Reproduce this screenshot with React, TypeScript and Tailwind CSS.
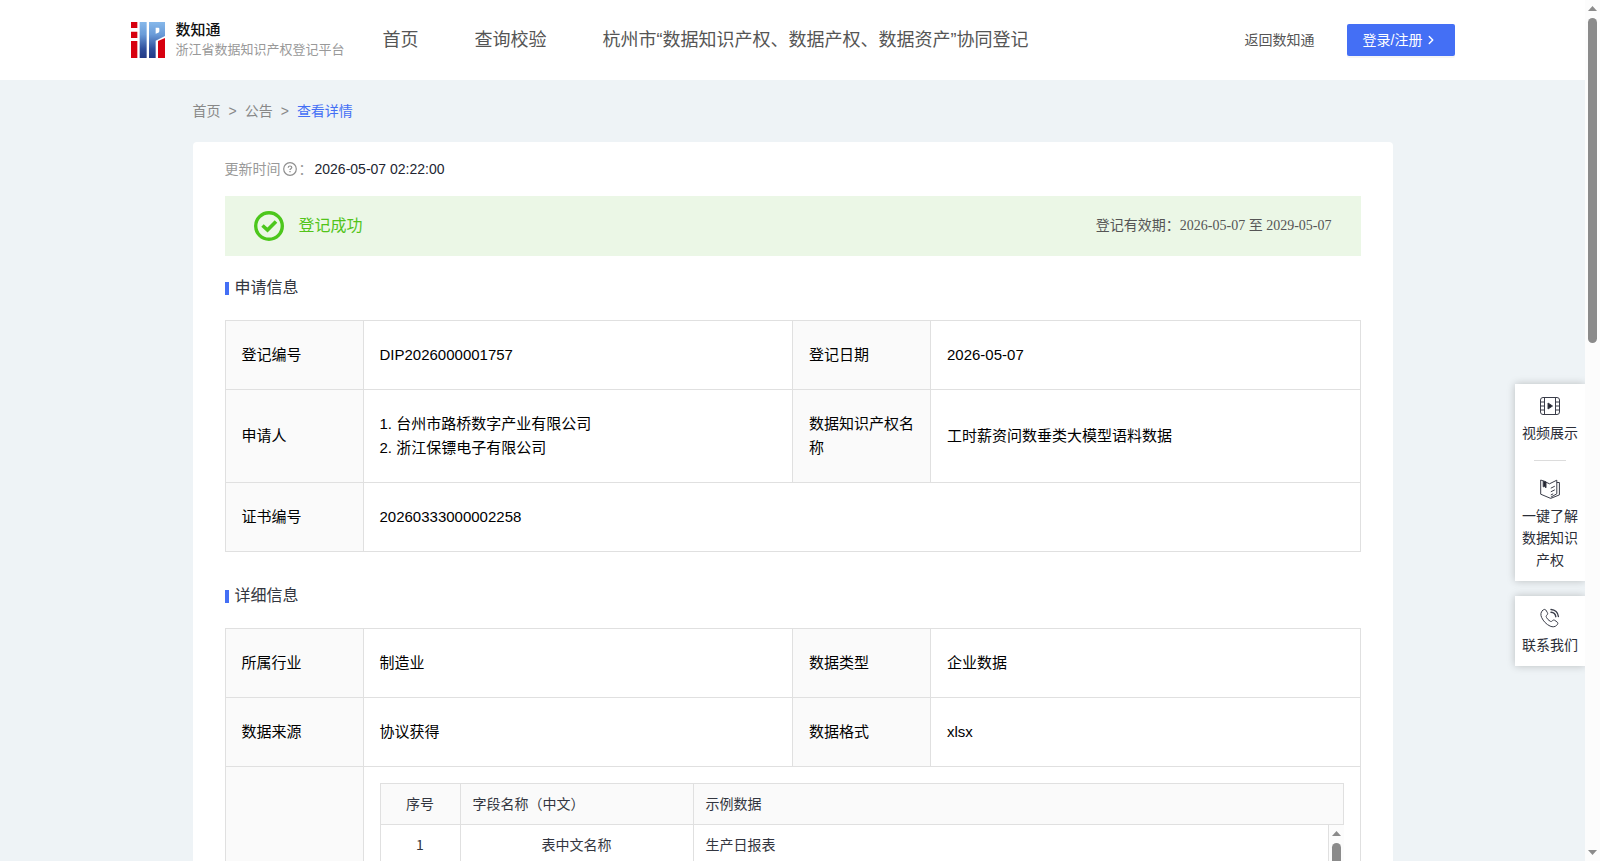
import { ReactNode } from 'react'
import { ChevronRight } from 'lucide-react'

const navLinks = ['首页', '查询校验', '杭州市“数据知识产权、数据产权、数据资产”协同登记']

const th = 'border border-[#e0e0e0] bg-[#fafafa] px-4 py-[22px] text-left align-middle font-normal'
const td = 'border border-[#e0e0e0] px-4 py-[22px] align-middle'

function Logo() {
  return (
    <svg className="h-9 w-[34px]" viewBox="0 0 102 108" aria-hidden="true">
      <defs>
        <linearGradient id="logo-blue" x1="0" y1="0" x2="0" y2="108" gradientUnits="userSpaceOnUse">
          <stop offset="0" stopColor="#86b8ea" />
          <stop offset="0.35" stopColor="#6a9bd8" />
          <stop offset="0.75" stopColor="#2f4f9c" />
          <stop offset="1" stopColor="#233a86" />
        </linearGradient>
      </defs>
      <path d="M0 0h19v18H0zM0 29h19v19H0zM0 57h19v51H0zM81 57l21-9v60H81z" fill="#d7000f" />
      <path
        d="M26 0h21v108H26zM54 0h48v42L74 56v52H54zM74 17v18l8-3q3-1 3-5v-7q0-3-3-3z"
        fill="url(#logo-blue)"
        fillRule="evenodd"
      />
    </svg>
  )
}

function VideoIcon() {
  return (
    <svg className="h-5 w-5" viewBox="0 0 20 20" fill="none" stroke="#3a3d49" aria-hidden="true">
      <rect x="0.5" y="1.5" width="19" height="17" rx="2.5" />
      <path d="M4.5 1.5v17M15.5 1.5v17M.5 6h4M.5 10h4M.5 14h4M15.5 6h4M15.5 10h4M15.5 14h4" />
      <path d="M8 7l4.5 3L8 13z" fill="#22242e" />
    </svg>
  )
}

function BookIcon() {
  return (
    <svg className="h-5 w-5" viewBox="0 0 20 20" fill="none" stroke="#3a3d49" strokeLinejoin="round" aria-hidden="true">
      <path d="M3 1.8L.7 1v14.2l10 4.2 8.700-3.500V3.500h-2.600" />
      <path d="M6 3.200l3.500 1.600 7.300-3.600v13.600l-6 3.400" />
      <path d="M10.800 9.200l4-2M10.800 12.800l4-2M10.800 16l2.400-1.200" />
      <path d="M3.200 1.800l2.800 1v6L4.600 7.600l-1.400.2z" fill="#22242e" />
    </svg>
  )
}

function PhoneIcon() {
  return (
    <svg className="h-5 w-5" viewBox="0 0 20 20" fill="none" stroke="#3a3d49" strokeLinecap="round" aria-hidden="true">
      <path d="M2.4 2.6C3.8 1.2 5 1 5.8 2l1.6 2.6c.6 1 .2 1.8-.6 2.6-.9.8-.8 1.4-.3 2.3.8 1.5 2 2.8 3.6 3.7.9.5 1.5.4 2.2-.4.8-.9 1.7-1 2.6-.4l2.3 1.7c1 .8.8 2-.5 3.2-1.6 1.6-4 2-6.6.8-3.7-1.7-6.8-4.9-8.5-8.7C.4 6.7.7 4.2 2.4 2.6z" />
      <path d="M11 1.5c4 .2 7 3 7.4 7M11 4.2c2.7.2 4.5 2 4.8 4.5" strokeWidth="1.4" />
    </svg>
  )
}

function SectionTitle({ children }: { children: ReactNode }) {
  return (
    <h2 className="mb-5 flex items-center gap-1.5 text-base leading-6 text-[#333640]">
      <span className="h-[13px] w-1 bg-[#446ff5]" />
      {children}
    </h2>
  )
}

function ColGroup() {
  return (
    <colgroup>
      <col className="w-[138px]" />
      <col />
      <col className="w-[138px]" />
      <col />
    </colgroup>
  )
}

function ScrollArrow({ down = false }: { down?: boolean }) {
  return (
    <svg className="h-[5px] w-[9px] shrink-0" viewBox="0 0 9 5" fill="#8b8b8b" aria-hidden="true">
      <path d={down ? 'M0 0h9L4.5 5z' : 'M0 5h9L4.5 0z'} />
    </svg>
  )
}

export default function App() {
  return (
    <div className="flex h-screen overflow-hidden bg-[#eef3f6] font-['Liberation_Sans','Noto_Sans_CJK_SC',sans-serif]">
      <div className="relative min-w-0 flex-1 overflow-hidden">
        {/* Header */}
        <header className="bg-white">
          <div className="mx-auto flex h-20 max-w-[1324px] items-center text-[#555]">
            <a href="#" className="mr-8 flex items-center gap-[11px] whitespace-nowrap">
              <Logo />
              <span className="flex w-[175px] flex-col">
                <span className="text-[15px] leading-5 font-medium text-[#111]">数知通</span>
                <span className="text-[13px] leading-5 text-[#999]">浙江省数据知识产权登记平台</span>
              </span>
            </a>
            <nav className="flex flex-1 gap-14 text-lg whitespace-nowrap">
              {navLinks.map((label) => (
                <a key={label} href="#">{label}</a>
              ))}
            </nav>
            <a href="#" className="mr-8 text-sm">返回数知通</a>
            <button
              type="button"
              className="flex h-8 w-[108px] items-center rounded-xs bg-[#446ff5] pl-4 text-sm text-white shadow-[0_2px_0_rgba(0,0,0,0.04)]"
            >
              登录/注册
              <ChevronRight className="ml-0.5 size-3.5" strokeWidth={2.5} aria-hidden="true" />
            </button>
          </div>
        </header>

        <main className="mx-auto max-w-[1200px]">
          {/* Breadcrumb */}
          <nav className="flex gap-2 py-5 text-sm leading-[22px] text-[#888]">
            <a href="#">首页</a>
            <span>&gt;</span>
            <a href="#">公告</a>
            <span>&gt;</span>
            <a href="#" className="text-[#446ff5]">查看详情</a>
          </nav>

          <div className="rounded bg-white px-8 pt-4">
            <p className="mb-4 flex items-center text-sm leading-[22px] text-[#999]">
              更新时间
              <svg className="mx-0.5 size-3.5" viewBox="0 0 14 14" fill="none" stroke="#8f8f8f" aria-hidden="true">
                <circle cx="7" cy="7" r="6.3" strokeWidth="1.2" />
                <path d="M5.2 5.7C5.2 4.6 6 4 7 4s1.8.6 1.8 1.5c0 1.2-1.8 1.2-1.8 2.5" strokeWidth="1.2" />
                <path d="M7 9v1.3" strokeWidth="1.3" />
              </svg>
              ：
              <time className="ml-0.5 text-[#222531]">2026-05-07 02:22:00</time>
            </p>

            {/* Status */}
            <div className="mb-5 flex h-15 items-center bg-[#ebf7e6] px-[29px]">
              <svg className="mr-[15px] size-[30px]" viewBox="0 0 30 30" fill="none" stroke="#4cc71c" aria-hidden="true">
                <circle cx="15" cy="15" r="13.3" strokeWidth="3.4" />
                <path d="M8.5 14.5l5 4.5 8.5-8.5" strokeWidth="3.6" />
              </svg>
              <span className="text-base text-[#52c41a]">登记成功</span>
              <span className="ml-auto font-['Liberation_Serif','Noto_Sans_CJK_SC',serif] text-sm text-[#555]">
                登记有效期：2026-05-07 至 2029-05-07
              </span>
            </div>

            <SectionTitle>申请信息</SectionTitle>
            <table className="mb-8 w-full table-fixed border-collapse text-[15px] leading-6 text-black">
              <ColGroup />
              <tbody>
                <tr>
                  <th scope="row" className={th}>登记编号</th>
                  <td className={td}>DIP2026000001757</td>
                  <th scope="row" className={th}>登记日期</th>
                  <td className={td}>2026-05-07</td>
                </tr>
                <tr>
                  <th scope="row" className={th}>申请人</th>
                  <td className={td}>
                    <p>1. 台州市路桥数字产业有限公司</p>
                    <p>2. 浙江保镖电子有限公司</p>
                  </td>
                  <th scope="row" className={th}>数据知识产权名称</th>
                  <td className={td}>工时薪资问数垂类大模型语料数据</td>
                </tr>
                <tr>
                  <th scope="row" className={th}>证书编号</th>
                  <td className={td} colSpan={3}>20260333000002258</td>
                </tr>
              </tbody>
            </table>

            <SectionTitle>详细信息</SectionTitle>
            <table className="w-full table-fixed border-collapse text-[15px] leading-6 text-black">
              <ColGroup />
              <tbody>
                <tr>
                  <th scope="row" className={th}>所属行业</th>
                  <td className={td}>制造业</td>
                  <th scope="row" className={th}>数据类型</th>
                  <td className={td}>企业数据</td>
                </tr>
                <tr>
                  <th scope="row" className={th}>数据来源</th>
                  <td className={td}>协议获得</td>
                  <th scope="row" className={th}>数据格式</th>
                  <td className={td}>xlsx</td>
                </tr>
                <tr>
                  <th className={th} />
                  <td className="border border-[#e0e0e0] p-4" colSpan={3}>
                    <div className="font-['Noto_Sans_CJK_SC',sans-serif] text-sm leading-5 text-[#333640]">
                      <table className="w-full table-fixed border-collapse bg-[#fafafa]">
                        <thead>
                          <tr className="h-[41px]">
                            <th className="w-20 border border-[#e0e0e0] pb-0.5 font-normal">序号</th>
                            <th className="w-[233px] border border-[#e0e0e0] px-3 pb-0.5 text-left font-normal">字段名称（中文）</th>
                            <th className="border border-[#e0e0e0] px-3 pb-0.5 text-left font-normal">示例数据</th>
                          </tr>
                        </thead>
                      </table>
                      <div className="flex h-50 overflow-hidden">
                        <table className="min-w-0 flex-1 table-fixed border-collapse self-start">
                          <tbody>
                            <tr className="h-[41px]">
                              <td className="w-20 border border-t-0 border-[#e0e0e0] pb-0.5 text-center">1</td>
                              <td className="w-[233px] border border-t-0 border-[#e0e0e0] px-3 pb-0.5 text-center">表中文名称</td>
                              <td className="border border-t-0 border-[#e0e0e0] px-3 pb-0.5">生产日报表</td>
                            </tr>
                          </tbody>
                        </table>
                        <div className="flex w-[15px] flex-col items-center gap-[7px] bg-[#fcfcfc] pt-1.5" aria-hidden="true">
                          <ScrollArrow />
                          <div className="h-24 w-[9px] rounded-full bg-[#8b8b8b]" />
                        </div>
                      </div>
                    </div>
                  </td>
                </tr>
              </tbody>
            </table>
          </div>
        </main>

        {/* Floating shortcuts */}
        <aside className="absolute top-[384px] right-0 flex w-[70px] flex-col gap-[15px] text-center text-sm leading-[22px] text-[#2b2e38]">
          <div className="bg-white px-[7px] pt-3 pb-2.5 shadow-[0_0_8px_rgba(0,0,0,0.22)]">
            <a href="#" className="flex flex-col items-center gap-1.5">
              <VideoIcon />
              视频展示
            </a>
            <hr className="mx-auto mt-4 mb-[18px] w-8 border-[#dcdcdc]" />
            <a href="#" className="flex flex-col items-center gap-1.5">
              <BookIcon />
              一键了解数据知识产权
            </a>
          </div>
          <div className="bg-white px-[7px] pt-3 pb-2.5 shadow-[0_0_8px_rgba(0,0,0,0.22)]">
            <a href="#" className="flex flex-col items-center gap-1.5">
              <PhoneIcon />
              联系我们
            </a>
          </div>
        </aside>
      </div>

      {/* Page scrollbar */}
      <div className="flex w-[15px] shrink-0 flex-col items-center bg-[#fcfcfc] py-1.5" aria-hidden="true">
        <ScrollArrow />
        <div className="mt-[7px] mb-auto h-[325px] w-[9px] rounded-full bg-[#8b8b8b]" />
        <ScrollArrow down />
      </div>
    </div>
  )
}
